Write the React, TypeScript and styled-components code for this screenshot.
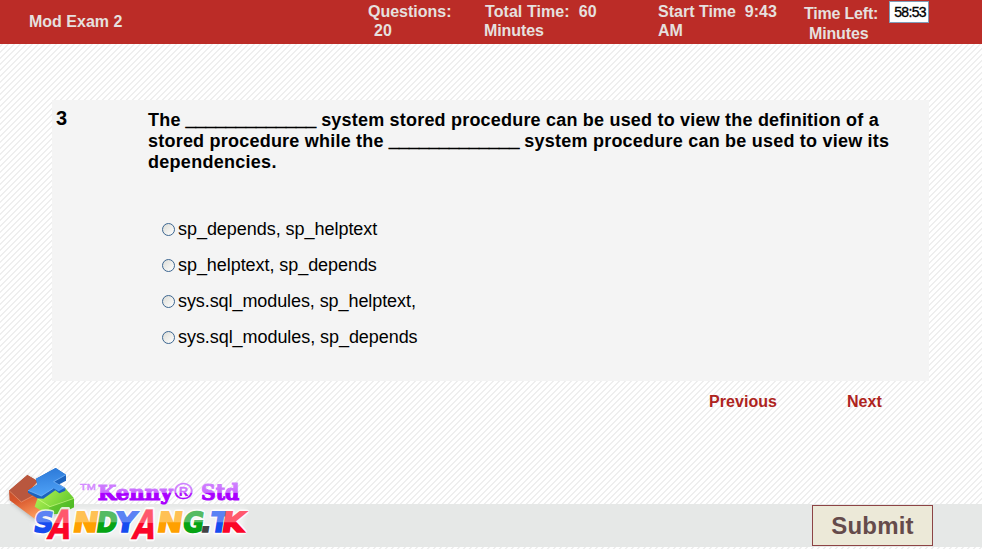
import React from "react";
import styled, { createGlobalStyle } from "styled-components";

const GlobalStyle = createGlobalStyle`
  * { box-sizing: border-box; }
  html, body, #root { height: 100%; margin: 0; }
  body {
    font-family: "Liberation Sans", Arial, sans-serif;
    color: #000;
    overflow: hidden;
    background: #fff repeating-linear-gradient(135deg, #fff 0 2.1px, #ebebeb 2.9px 3.3px, #fff 4.2426px);
  }
`;

const Page = styled.div`
  height: 549px;
  display: flex;
  flex-direction: column;
`;

const Header = styled.header`
  height: 44px;
  flex: none;
  display: grid;
  grid-template-columns: 368px 117px 173px 146px 1fr;
  background: #bb2c27;
  color: #e6e0df;
  font-weight: bold;
  font-size: 16px;
  line-height: 19px;
  white-space: pre;
`;

const Title = styled.div`
  padding: 12px 0 0 29px;
`;

const Stat = styled.div`
  padding-top: 2px;
`;

const StatLine = styled.div<{ $spacing?: number; $indent?: number }>`
  letter-spacing: ${(p) => p.$spacing ?? 0}px;
  margin-left: ${(p) => p.$indent ?? 0}px;
`;

const TimeLeft = styled.div`
  padding-top: 4px;
  line-height: 20px;
`;

const TimeRow = styled.div`
  height: 20px;
  display: flex;
  align-items: flex-start;
`;

const Clock = styled.div`
  width: 40px;
  height: 22px;
  margin: -3px 0 0 11px;
  background: #fff;
  border: 1px solid #7f9db9;
  color: #000;
  font-size: 14px;
  font-weight: normal;
  -webkit-text-stroke: 0.35px #000;
  line-height: 21px;
  padding-left: 4px;
  letter-spacing: -0.65px;
`;

const Panel = styled.main`
  width: 877px;
  height: 281px;
  margin: 56px 0 0 52px;
  flex: none;
  display: grid;
  grid-template-columns: 96px 1fr;
  background: #f4f4f4;
  padding-top: 8px;
`;

const Num = styled.div`
  padding-left: 4px;
  font-size: 20px;
  font-weight: bold;
  line-height: 21px;
`;

const Question = styled.div`
  height: 103px;
  padding-top: 2px;
  font-size: 18px;
  font-weight: bold;
  line-height: 21px;
  white-space: nowrap;
`;

const Line = styled.div<{ $spacing: number }>`
  letter-spacing: ${(p) => p.$spacing}px;
`;

const Blank = styled.span`
  letter-spacing: 0;
  -webkit-text-stroke: 0.8px #000;
`;

const Option = styled.label<{ $spacing: number }>`
  height: 36px;
  margin-left: 14px;
  display: flex;
  align-items: center;
  gap: 3px;
  font-size: 18px;
  letter-spacing: ${(p) => p.$spacing}px;
`;

const Radio = styled.input`
  appearance: none;
  width: 13px;
  height: 13px;
  margin: 1px 0 0;
  border: 1px solid #3c6690;
  border-radius: 50%;
  background: linear-gradient(135deg, #dcdcd6, #fff);
`;

const Nav = styled.nav`
  height: 123px;
  flex: none;
  display: flex;
  gap: 70px;
  padding: 11px 0 0 709px;
`;

const NavLink = styled.a`
  height: 19px;
  color: #ae2320;
  font-size: 16px;
  font-weight: bold;
  line-height: 19px;
  letter-spacing: 0.05px;
`;

const Footer = styled.footer`
  height: 43px;
  flex: none;
  display: flex;
  justify-content: flex-end;
  padding: 1px 49px 0 0;
  background: #e6e8e7;
`;

const Submit = styled.button`
  width: 121px;
  height: 41px;
  padding: 0;
  border: 1px solid #8d4445;
  background: #ece9d8;
  color: #654b4b;
  font: bold 24px "Liberation Sans", Arial, sans-serif;
  letter-spacing: 0.2px;
`;

const Watermark = styled.svg`
  position: absolute;
  left: 0;
  top: 460px;
  width: 260px;
  height: 89px;
`;

const tints: Record<string, [string, string]> = {
  blue: ["#5b82f4", "#174cf0"],
  red: ["#ff596d", "#fb0628"],
  orange: ["#ffc154", "#ffa000"],
  green: ["#55bb64", "#06a414"],
  gray: ["#777", "#444"],
};

const letters: { c: string; x: number; w: number; tint: string; tall?: boolean }[] = [
  { c: "S", x: 98, w: 58, tint: "blue" },
  { c: "N", x: 215, w: 76, tint: "orange" },
  { c: "D", x: 286, w: 62, tint: "green" },
  { c: "Y", x: 343, w: 62, tint: "blue" },
  { c: "A", x: 139, w: 68, tint: "red", tall: true },
  { c: "N", x: 468, w: 76, tint: "orange" },
  { c: "A", x: 392, w: 68, tint: "red", tall: true },
  { c: "G", x: 545, w: 62, tint: "green" },
  { c: ".", x: 599, w: 32, tint: "gray" },
  { c: "T", x: 628, w: 54, tint: "blue" },
  { c: "K", x: 662, w: 68, tint: "red" },
];

const glyphProps = (l: (typeof letters)[number]) => ({
  transform: l.tall ? `translate(${l.x} 236) skewX(-14)` : `translate(${l.x} 215) skewX(-9)`,
  fontSize: l.tall ? 122 : 83,
  textLength: l.w,
  lengthAdjust: "spacingAndGlyphs" as const,
});

function Brand() {
  return (
    <Watermark viewBox="0 0 780 267">
      <defs>
        {Object.entries(tints).map(([name, [top, bottom]]) =>
          [0, 20].map((drop) => (
            <linearGradient
              key={name + drop}
              id={name + drop}
              gradientUnits="userSpaceOnUse"
              x1="0"
              x2="0"
              y1={-66 - drop}
              y2={6 - drop}
            >
              <stop offset="0" stopColor={top} />
              <stop offset="0.52" stopColor={top} />
              <stop offset="0.54" stopColor={bottom} />
            </linearGradient>
          ))
        )}
        <linearGradient id="violet" gradientUnits="userSpaceOnUse" x1="0" x2="0" y1="70" y2="135">
          <stop offset="0" stopColor="#cf80ff" />
          <stop offset="0.42" stopColor="#ca6cff" />
          <stop offset="0.45" stopColor="#a900ff" />
        </linearGradient>
        <linearGradient id="rust" x1="0.2" x2="0.6" y1="0" y2="1">
          <stop offset="0" stopColor="#b4482b" />
          <stop offset="0.5" stopColor="#d8562c" />
          <stop offset="1" stopColor="#ffa060" />
        </linearGradient>
        <linearGradient id="sky" x1="0.4" x2="0.5" y1="0" y2="1">
          <stop offset="0" stopColor="#2c79d8" />
          <stop offset="1" stopColor="#4fa2f7" />
        </linearGradient>
        <linearGradient id="lime" x1="0" x2="1" y1="0" y2="0.5">
          <stop offset="0" stopColor="#b9f55a" />
          <stop offset="1" stopColor="#62c92c" />
        </linearGradient>
        <filter id="glow" x="-10%" y="-30%" width="120%" height="160%">
          <feGaussianBlur stdDeviation="7" />
        </filter>
        <filter id="halo" x="-10%" y="-30%" width="120%" height="160%">
          <feGaussianBlur stdDeviation="2" />
        </filter>
      </defs>
      <path d="M92 144H738L724 232H104Z" fill="#fff" opacity=".45" filter="url(#glow)" />
      <path d="M28 96L84 48L142 92L220 130L174 164L107 184L30 123Z" fill="#555" opacity=".35" filter="url(#glow)" />
      <path d="M27 92L82 45L114 64L92 88L113 115L150 140L106 178L29 121Z" fill="url(#rust)" />
      <path d="M27 92L82 45L112 63L84 88L108 103L64 126Z" fill="#b9573e" />
      <path d="M27 92L64 126L108 103" fill="none" stroke="#f09a76" strokeWidth="2" />
      <path d="M112 116L166 88L196 85L222 115V142L180 162H140L104 140Z" fill="url(#lime)" />
      <path d="M150 140L190 124L222 115V142L180 162H140Z" fill="#3fae1e" opacity=".45" />
      <path d="M112 116L150 140L222 115" fill="none" stroke="#d5ff8d" strokeWidth="2" />
      <path d="M84 91L112 74L108 56L167 24L198 44V62L178 73L196 84V92L178 100L166 91L130 116L112 115L84 98Z" fill="#1c63bd" />
      <path d="M84 91L112 74L108 56L167 24L198 44L161 65L194 84L176 94L160 85L124 108Z" fill="url(#sky)" />
      <path d="M198 44L161 65L194 84M84 91L124 108L160 85" fill="none" stroke="#83beff" strokeWidth="2" />
      <text x="240" y="91" textLength="47" lengthAdjust="spacingAndGlyphs" fill="#d48aff" stroke="#d48aff" strokeWidth="1.5" fontFamily="Liberation Sans, sans-serif" fontSize="28">TM</text>
      <g fill="url(#violet)" stroke="url(#violet)" strokeWidth="3" fontFamily="DejaVu Serif, serif" fontWeight="bold" fontSize="60">
        <text x="293" y="121" textLength="225" lengthAdjust="spacingAndGlyphs">Kenny</text>
        <text x="523" y="118" fontSize="68" fontWeight="normal" strokeWidth="1.5" fontFamily="Liberation Sans, sans-serif" textLength="55" lengthAdjust="spacingAndGlyphs">®</text>
        <text x="603" y="121" fontSize="64" textLength="115" lengthAdjust="spacingAndGlyphs">Std</text>
      </g>
      <g fontFamily="DejaVu Sans, sans-serif" fontWeight="bold">
        <g fill="#fff" stroke="#fff" strokeWidth="14" strokeLinejoin="round" filter="url(#halo)" opacity=".8" aria-hidden="true">
          {letters.map((l) => (
            <text key={l.x} {...glyphProps(l)}>{l.c}</text>
          ))}
        </g>
        {letters.map((l) => (
          <text
            key={l.x}
            {...glyphProps(l)}
            fill={`url(#${l.tint}${l.tall ? 20 : 0})`}
            stroke={`url(#${l.tint}${l.tall ? 20 : 0})`}
            strokeWidth={l.tall ? 1 : 5}
          >
            {l.c}
          </text>
        ))}
      </g>
    </Watermark>
  );
}

const options = [
  { text: "sp_depends, sp_helptext", spacing: -0.04 },
  { text: "sp_helptext, sp_depends", spacing: -0.06 },
  { text: "sys.sql_modules, sp_helptext,", spacing: -0.08 },
  { text: "sys.sql_modules, sp_depends", spacing: -0.06 },
];

export default function App() {
  return (
    <Page>
      <GlobalStyle />
      <Header>
        <Title>Mod Exam 2</Title>
        <Stat>
          <StatLine>Questions:</StatLine>
          <StatLine $indent={6}>20</StatLine>
        </Stat>
        <Stat>
          <StatLine $spacing={0.07}>{"Total Time:  60"}</StatLine>
          <StatLine $spacing={-0.1} $indent={-1}>Minutes</StatLine>
        </Stat>
        <Stat>
          <StatLine>{"Start Time  9:43"}</StatLine>
          <StatLine>AM</StatLine>
        </Stat>
        <TimeLeft>
          <TimeRow>
            <StatLine $spacing={-0.2}>Time Left:</StatLine>
            <Clock>58:53</Clock>
          </TimeRow>
          <StatLine $spacing={-0.15} $indent={5}>Minutes</StatLine>
        </TimeLeft>
      </Header>
      <Panel>
        <Num>3</Num>
        <div>
          <Question>
            <Line $spacing={0.2}>
              The <Blank>_____________</Blank> system stored procedure can be used to view the definition of a
            </Line>
            <Line $spacing={0.22}>
              stored procedure while the <Blank>_____________</Blank> system procedure can be used to view its
            </Line>
            <Line $spacing={0.28}>dependencies.</Line>
          </Question>
          {options.map((o) => (
            <Option key={o.text} $spacing={o.spacing}>
              <Radio type="radio" name="answer" />
              {o.text}
            </Option>
          ))}
        </div>
      </Panel>
      <Nav>
        <NavLink>Previous</NavLink>
        <NavLink>Next</NavLink>
      </Nav>
      <Footer>
        <Submit>Submit</Submit>
      </Footer>
      <Brand />
    </Page>
  );
}
